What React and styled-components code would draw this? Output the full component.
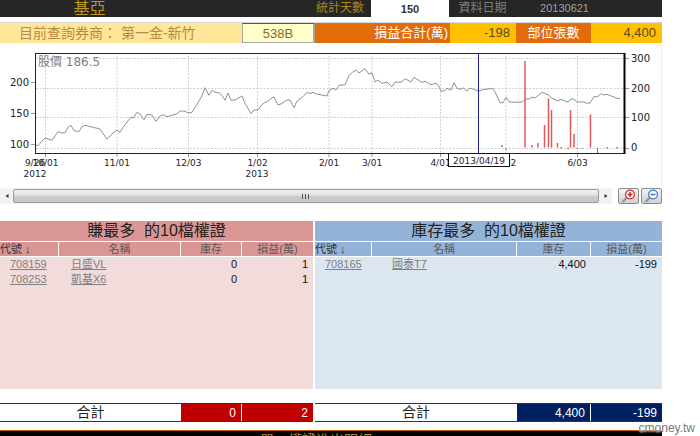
import styled, { createGlobalStyle } from "styled-components";

const prices = [
  [36, 145], [38, 145.7], [45, 138], [52, 140.3], [58, 131.7], [62, 133], [65, 132.7], [68, 127.3],
  [71, 125.3], [74, 130.7], [79, 131.7], [82, 126.7], [85, 125.3], [92, 127], [100, 129], [107, 139.3],
  [113, 133], [117, 130], [120, 132.3], [123, 127.3], [131, 117], [133, 118.3], [137, 112.3], [140, 114],
  [144, 119.7], [147, 114.3], [152, 115], [156, 121.3], [160, 116], [163, 114.7], [167, 116.7], [177, 113.7],
  [180, 111], [184, 111], [189, 113], [192, 112.3], [197, 104.3], [202, 95.7], [205, 87.7], [209, 95.3],
  [212, 90.3], [216, 92.7], [219, 92.7], [222, 95.3], [225, 100.3], [228, 93], [231, 100.3], [235, 100],
  [242, 96], [245, 103.3], [251, 113.7], [254, 110], [258, 110], [262, 104.7], [265, 102.3], [267, 102],
  [272, 97.7], [274, 97], [278, 105], [281, 104], [287, 100], [290, 100], [294, 107.7], [297, 101],
  [303, 96.7], [307, 92.3], [310, 93.7], [313, 92.3], [316, 94], [327, 96], [329, 90.7], [333, 88.3],
  [336, 90], [339, 85.3], [345, 84.7], [349, 75.7], [353, 71.7], [356, 70.3], [359, 73], [365, 68.7],
  [369, 74.3], [372, 72.7], [375, 82], [378, 80], [382, 83.3], [387, 82.3], [392, 86.7], [395, 82],
  [401, 82.3], [405, 78.7], [411, 82], [414, 77.3], [422, 82.3], [425, 81.3], [431, 84.7], [436, 83.3],
  [438, 84.7], [441, 91], [444, 91], [447, 88.3], [451, 90], [454, 82.7], [457, 88.3], [461, 89.3],
  [463, 87.7], [467, 91], [470, 88], [478, 91], [483, 89.7], [493, 88.3], [497, 96], [500, 102.7],
  [503, 102.7], [506, 97.3], [509, 101.7], [513, 102.3], [522, 102], [526, 99], [529, 99], [532, 97],
  [535, 98], [542, 92.3], [548, 94.7], [552, 98.3], [558, 101], [561, 99.3], [568, 102.3], [571, 99],
  [574, 99.3], [577, 102], [584, 102], [587, 103.3], [590, 103], [594, 96.7], [598, 96.3], [601, 93.7],
  [604, 95], [607, 94.3], [617, 98.3], [620, 98.7],
];

// x, top, bottom
const gains = [
  [502, 145, 147], [525, 61, 147.5], [532, 145, 147.5], [538, 143, 147.5], [544.5, 125, 147.5],
  [548.5, 98.5, 147.5], [551.5, 110, 147.5], [557.5, 143, 147.5], [561, 147, 148.5], [570.5, 110, 147.5],
  [574, 134, 147.5], [590.5, 114.5, 147.5], [607, 147, 148.5], [617, 147, 148.5],
];
const losses = [
  [506, 148, 150], [568, 147.5, 149.5], [577, 148, 149], [582, 148, 149], [597.5, 148, 153],
];

const months = [
  [45.5, "10/01"], [117, "11/01"], [188.5, "12/03"], [257.5, "1/02"], [329, "2/01"],
  [372, "3/01"], [440.5, "4/01"], [506, "5/02"], [577.5, "6/03"],
];

const tables = [
  {
    title: "賺最多  的10檔權證",
    tone: "red",
    cols: [59, 122, 61, 71],
    rows: [
      ["708159", "日盛VL", "0", "1"],
      ["708253", "凱基X6", "0", "1"],
    ],
    total: ["0", "2"],
  },
  {
    title: "庫存最多  的10檔權證",
    tone: "blue",
    cols: [57, 145, 74, 71],
    rows: [["708165", "國泰T7", "4,400", "-199"]],
    total: ["4,400", "-199"],
  },
];

const tones = {
  red: { head: "#da9694", body: "#f2dcdb", total: "#c00000", nameIndent: "12px" },
  blue: { head: "#95b3d7", body: "#dce6f1", total: "#002060", nameIndent: "20px" },
};

const PriceChart = () => (
  <Chart viewBox="0 45 661 142" role="img" aria-label="股價 186.5">
    <g stroke="#cfcfcf" strokeDasharray="2 1.5">
      {[58.5, 88.5, 117.5, 148.5].map((y) => (
        <line key={y} x1="36" x2="624" y1={y} y2={y} />
      ))}
      {months.map(([x]) => (
        <line key={x} x1={x} x2={x} y1="56" y2="153" />
      ))}
    </g>
    <g stroke="#999">
      {[82.5, 113.5, 144.5].map((y) => (
        <line key={y} x1="31" x2="35" y1={y} y2={y} />
      ))}
      {[58.5, 88.5, 117.5, 148.5].map((y) => (
        <line key={y} x1="625" x2="629" y1={y} y2={y} />
      ))}
      {months.map(([x]) => (
        <line key={x} x1={x} x2={x} y1="154" y2="157" />
      ))}
    </g>
    <polyline points={prices.join(" ")} fill="none" stroke="#858585" strokeWidth="0.9" />
    {gains.map(([x, top, bottom]) => (
      <line key={x} x1={x} x2={x} y1={top} y2={bottom} stroke="#dc5a5a" strokeWidth="1.5" />
    ))}
    {losses.map(([x, top, bottom]) => (
      <line key={x} x1={x} x2={x} y1={top} y2={bottom} stroke="#4c8a4c" />
    ))}
    <rect x="35.5" y="53.5" width="589" height="100" fill="none" stroke="#222" />
    <line x1="624.5" x2="624.5" y1="53" y2="154" stroke="#000" strokeWidth="2" />
    <line x1="478.5" x2="478.5" y1="54" y2="153" stroke="#1c1c9c" />
    <ChartTitle x="38" y="66">股價 186.5</ChartTitle>
    <AxisLabel x="29" y="86" textAnchor="end">200</AxisLabel>
    <AxisLabel x="29" y="117" textAnchor="end">150</AxisLabel>
    <AxisLabel x="29" y="148" textAnchor="end">100</AxisLabel>
    <AxisLabel x="631" y="62">300</AxisLabel>
    <AxisLabel x="631" y="92">200</AxisLabel>
    <AxisLabel x="631" y="121">100</AxisLabel>
    <AxisLabel x="631" y="151">0</AxisLabel>
    <DateLabel x="35" y="166">9/26</DateLabel>
    {months.map(([x, label]) => (
      <DateLabel key={label} x={x} y="166">{label}</DateLabel>
    ))}
    <DateLabel x="35" y="177">2012</DateLabel>
    <DateLabel x="257" y="177">2013</DateLabel>
    <rect x="448.5" y="153.5" width="61" height="13" fill="#fff" stroke="#111" />
    <DateLabel x="479" y="164">2013/04/19</DateLabel>
  </Chart>
);

const Magnifier = ({ color, plus }) => (
  <svg width="16" height="14" viewBox="0 0 16 14" aria-hidden="true">
    <path d="M6 8.5 1.5 13" stroke="#999" strokeWidth="2.4" />
    <circle cx="9" cy="5.5" r="4.4" fill="#fff" stroke={color} strokeWidth="1.2" />
    <path d={plus ? "M6.5 5.5h5M9 3v5" : "M6.5 5.5h5"} stroke={color} strokeWidth="1.5" />
  </svg>
);

const Arrow = ({ right }) => (
  <svg width="4" height="6" viewBox="0 0 4 6" aria-hidden="true">
    <path d={right ? "M0.5 1v4l3-2z" : "M3.5 1v4l-3-2z"} fill="#333" />
  </svg>
);

const Columns = ({ cols }) => {
  const sum = cols.reduce((a, b) => a + b, 0);
  return (
    <colgroup>
      {cols.map((c, i) => (
        <Col key={i} $share={(c / sum) * 100} />
      ))}
    </colgroup>
  );
};

const WarrantTable = ({ title, tone, cols, rows, total }) => (
  <div>
    <Pane $tone={tone}>
      <Table>
        <Caption $tone={tone}>{title}</Caption>
        <Columns cols={cols} />
        <thead>
          <tr>
            <Head $tone={tone} $first>代號 ↓</Head>
            <Head $tone={tone}>名稱</Head>
            <Head $tone={tone}>庫存</Head>
            <Head $tone={tone}>損益(萬)</Head>
          </tr>
        </thead>
        <tbody>
          {rows.map(([id, name, stock, profit]) => (
            <tr key={id}>
              <Cell><Link href="#">{id}</Link></Cell>
              <NameCell $tone={tone}><Link href="#">{name}</Link></NameCell>
              <NumberCell>{stock}</NumberCell>
              <NumberCell>{profit}</NumberCell>
            </tr>
          ))}
        </tbody>
      </Table>
    </Pane>
    <TotalTable>
      <Columns cols={cols} />
      <tbody>
        <tr>
          <TotalLabel colSpan={2} scope="row">合計</TotalLabel>
          {total.map((value, i) => (
            <TotalCell key={i} $tone={tone}>{value}</TotalCell>
          ))}
        </tr>
      </tbody>
    </TotalTable>
  </div>
);

const App = () => (
  <>
    <GlobalStyle />
    <Page>
      <TopBar>
        <StockName>基亞</StockName>
        <DaysLabel htmlFor="days">統計天數</DaysLabel>
        <DaysInput id="days" defaultValue="150" />
        <DateTitle>資料日期</DateTitle>
        <DateValue>20130621</DateValue>
      </TopBar>
      <Summary>
        <BrokerLabel htmlFor="broker">目前查詢券商： 第一金-新竹</BrokerLabel>
        <BrokerInput id="broker" defaultValue="538B" />
        <SummaryLabel $align="right">損益合計(萬)</SummaryLabel>
        <SummaryValue>-198</SummaryValue>
        <SummaryLabel $align="center">部位張數</SummaryLabel>
        <SummaryValue>4,400</SummaryValue>
      </Summary>
      <PriceChart />
      <ChartTools>
        <ScrollBar>
          <ScrollButton aria-label="向左"><Arrow /></ScrollButton>
          <Thumb>
            <Grip /><Grip /><Grip />
          </Thumb>
          <ScrollButton aria-label="向右"><Arrow right /></ScrollButton>
        </ScrollBar>
        <ZoomButton aria-label="放大"><Magnifier color="#cc2b2b" plus /></ZoomButton>
        <ZoomButton aria-label="縮小"><Magnifier color="#3a78c4" /></ZoomButton>
      </ChartTools>
      <Tables>
        {tables.map((table) => (
          <WarrantTable key={table.tone} {...table} />
        ))}
      </Tables>
      <NextSection>單一權證進出明細</NextSection>
      <Watermark>cmoney.tw</Watermark>
    </Page>
  </>
);

export default App;

const GlobalStyle = createGlobalStyle`
  * {
    box-sizing: border-box;
  }

  body {
    margin: 0;
    background: #fff;
    font-family: "Liberation Sans", "Noto Sans CJK TC", sans-serif;
    font-size: 11px;
  }
`;

const Page = styled.div`
  position: relative;
  height: 100vh;
  overflow: hidden;
  padding-right: 38px;
`;

const TopBar = styled.header`
  display: grid;
  grid-template-columns: 179fr 192fr 78fr 67fr 75fr 71fr;
  height: 17px;
  background: #262626;
  line-height: 17px;
`;

const StockName = styled.h1`
  margin: 0;
  font-size: 16px;
  font-weight: 400;
  text-align: center;
  color: #c0981c;
`;

const DaysLabel = styled.label`
  padding-right: 7px;
  font-size: 12px;
  text-align: right;
  color: #a88618;
`;

const DaysInput = styled.input`
  min-width: 0;
  width: 100%;
  padding: 0;
  border: 0;
  background: #fff;
  font: 700 11px "Liberation Sans", sans-serif;
  text-align: center;
  color: #333;
`;

const DateTitle = styled.span`
  font-size: 12px;
  text-align: center;
  color: #7f7f7f;
`;

const DateValue = styled.span`
  padding-right: 2px;
  text-align: right;
  color: #a0a0a0;
`;

const Summary = styled.section`
  display: grid;
  grid-template-columns: 242fr 73fr 135fr 66fr 75fr 71fr;
  height: 21px;
  margin-top: 5px;
  margin-bottom: 2px;
  border-top: 1px solid #d9d9d9;
  line-height: 20px;
`;

const BrokerLabel = styled.label`
  padding-left: 19px;
  background: #ffe699;
  font-size: 14px;
  white-space: nowrap;
  color: #b98a3c;
`;

const BrokerInput = styled.input`
  min-width: 0;
  width: 100%;
  padding: 0;
  border: 1px solid #a6a6a6;
  border-top-color: #555;
  border-right-width: 2px;
  background: #ffffcc;
  font: 13px "Liberation Sans", sans-serif;
  text-align: center;
  color: #8a6a2a;
`;

const SummaryLabel = styled.span`
  padding-right: ${(props) => (props.$align === "right" ? "2px" : "0")};
  background: #e26b0a;
  font-size: 13px;
  text-align: ${(props) => props.$align};
  white-space: nowrap;
  color: #fff;
`;

const SummaryValue = styled.span`
  padding-right: 6px;
  background: #ffc000;
  font-size: 13px;
  text-align: right;
  color: #5c4a1c;
`;

const Chart = styled.svg`
  display: block;
  width: 100%;
  border-right: 1px solid #ececec;
`;

const ChartTitle = styled.text`
  font: 12px "DejaVu Sans", "Noto Sans CJK TC", sans-serif;
  fill: #808080;
`;

const AxisLabel = styled.text`
  font: 10px "DejaVu Sans", sans-serif;
  fill: #222;
`;

const DateLabel = styled.text`
  font: 9px "DejaVu Sans", sans-serif;
  text-anchor: middle;
  fill: #2a1a2e;
`;

const ChartTools = styled.div`
  display: flex;
  align-items: center;
  gap: 2px;
  height: 18px;
`;

const ScrollBar = styled.div`
  display: flex;
  flex: 1;
  height: 16px;
  margin-right: 4px;
  background: #f2f2f2;
`;

const ScrollButton = styled.button`
  all: unset;
  display: grid;
  place-items: center;
  width: 13px;
  cursor: pointer;
`;

const Thumb = styled.div`
  display: flex;
  flex: 1;
  align-items: center;
  justify-content: center;
  gap: 1px;
  height: 14px;
  margin: 1px 0;
  border: 1px solid #9a9a9a;
  border-radius: 2px;
  background: linear-gradient(#f3f3f3, #dedee0 45%, #cbcbce 55%, #c6c6c9);
`;

const Grip = styled.span`
  width: 1px;
  height: 5px;
  margin-right: 1px;
  background: #555;
`;

const ZoomButton = styled.button`
  display: grid;
  place-items: center;
  width: 21px;
  height: 16px;
  padding: 0;
  border: 1px solid #8c8c8c;
  border-radius: 2px;
  background: linear-gradient(#f4f4f4, #d0d0d0);
  cursor: pointer;
`;

const Tables = styled.main`
  display: grid;
  grid-template-columns: 313fr 347fr;
  gap: 2px;
  margin-top: 16px;
`;

const Pane = styled.div`
  min-height: 168px;
  background: ${(props) => tones[props.$tone].body};
`;

const Table = styled.table`
  width: 100%;
  table-layout: fixed;
  border-collapse: separate;
  border-spacing: 0;
`;

const Col = styled.col`
  width: ${(props) => props.$share}%;
`;

const Caption = styled.caption`
  height: 21px;
  border-bottom: 1px solid #fff;
  background: ${(props) => tones[props.$tone].head};
  font-size: 16px;
  line-height: 20px;
  white-space: pre;
  color: #222;
`;

const Head = styled.th`
  height: 15px;
  padding: 0;
  border-right: 1px solid #fff;
  border-bottom: 1px solid #fff;
  background: ${(props) => tones[props.$tone].head};
  font-weight: 400;
  line-height: 14px;
  text-align: ${(props) => (props.$first ? "left" : "center")};
  color: ${(props) => (props.$first ? "#333" : "#595959")};

  &:last-child {
    border-right: 0;
  }
`;

const Cell = styled.td`
  height: 15px;
  padding: 0 0 0 10px;
  line-height: 15px;
  white-space: nowrap;
  color: #111;
`;

const NameCell = styled(Cell)`
  padding-left: ${(props) => tones[props.$tone].nameIndent};
`;

const NumberCell = styled(Cell)`
  padding: 0 5px 0 0;
  text-align: right;
`;

const Link = styled.a`
  color: #808080;
`;

const TotalTable = styled(Table)`
  margin-top: 14px;
  border-top: 1px solid #333;
  border-bottom: 1px solid #333;
`;

const TotalLabel = styled.th`
  height: 17px;
  padding: 0;
  font-size: 14px;
  font-weight: 400;
  line-height: 17px;
  color: #222;
`;

const TotalCell = styled.td`
  height: 17px;
  padding: 2px 5px 0 0;
  border-right: 1px solid #fff;
  background: ${(props) => tones[props.$tone].total};
  font-size: 12px;
  line-height: 15px;
  text-align: right;
  color: #fff;

  &:last-child {
    border-right: 0;
  }
`;

const NextSection = styled.footer`
  margin-top: 8px;
  padding-left: 260px;
  border-top: 1px solid #c55a11;
  background: #000;
  font-size: 14px;
  line-height: 18px;
  color: #b8901c;
`;

const Watermark = styled.span`
  position: absolute;
  right: 5px;
  bottom: 0;
  font-size: 12px;
  line-height: 16px;
  color: #777;
  text-shadow: 0 0 2px #fff, 0 0 2px #fff;
`;
